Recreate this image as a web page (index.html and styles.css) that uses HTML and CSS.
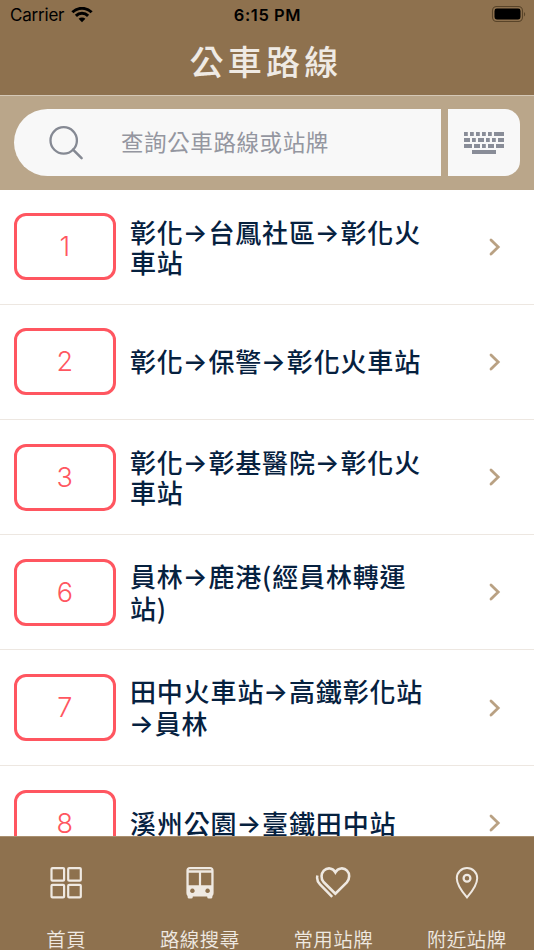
FILE: index.html
```html
<!DOCTYPE html>
<html lang="zh-Hant">
<head>
<meta charset="utf-8">
<title>公車路線</title>
<link rel="stylesheet" href="styles.css">
</head>
<body>
<div class="app">
  <header class="header">
    <div class="status">
      <div class="carrier"><span>Carrier</span>
        <svg width="22" height="16" viewBox="0 0 22 16"><g fill="none" stroke="#000" stroke-width="3"><path d="M1.4 5.3a13.6 13.6 0 0 1 19.2 0"/><path d="M4.9 8.9a8.6 8.6 0 0 1 12.2 0"/></g><path d="M7.6 11.8a4.8 4.8 0 0 1 6.8 0L11 15.3z"/></svg>
      </div>
      <div class="time">6:15 PM</div>
      <div class="battery">
        <svg width="36" height="18" viewBox="0 0 36 18"><rect x="1.5" y="1.5" width="30" height="15" rx="4.2" fill="none" stroke="#594429" stroke-width="1.1"/><rect x="3.5" y="3.6" width="26" height="10.8" rx="2.3"/><path d="M33 7v4.4c1.6-.8 1.6-3.6 0-4.4z" fill="#594429"/></svg>
      </div>
    </div>
    <h1 class="title">公車路線</h1>
  </header>
  <div class="search">
    <div class="field">
      <svg class="lens" width="36" height="36" viewBox="0 0 36 36" fill="none" stroke="#858993" stroke-width="2.3"><circle cx="15.7" cy="15.4" r="13.2"/><path d="M25 24.6l8.6 8.6" stroke-linecap="round" stroke-width="2.5"/></svg>
      <span class="placeholder">查詢公車路線或站牌</span>
    </div>
    <div class="keys">
      <svg width="40" height="23" viewBox="0 0 40 23" fill="#898d98"><path d="M0 0h3.8v4H0zM6 0h3.8v4H6zM12 0h3.8v4H12zM18 0h3.8v4H18zM24 0h3.8v4H24zM30 0h10v4H30zM0 6h6v4H0zM8 6h3.8v4H8zM14 6h6v4h-6zM22 6h3.8v4H22zM28 6h3.8v4H28zM34 6h6v4h-6zM0 12h8v4H0zM10 12h6v4h-6zM18 12h3.8v4H18zM24 12h6v4h-6zM32 12h8v4h-8zM8 18h24v4H8z"/></svg>
    </div>
  </div>
  <main class="list">
    <div class="row"><div class="badge">1</div><div class="name tight">彰化<i>→</i>台鳳社區<i>→</i>彰化火<br>車站</div><svg class="chev" viewBox="0 0 12 18"><path d="M2 2l7.2 7L2 16"/></svg></div>
    <div class="row"><div class="badge">2</div><div class="name tight">彰化<i>→</i>保警<i>→</i>彰化火車站</div><svg class="chev" viewBox="0 0 12 18"><path d="M2 2l7.2 7L2 16"/></svg></div>
    <div class="row"><div class="badge">3</div><div class="name tight">彰化<i>→</i>彰基醫院<i>→</i>彰化火<br>車站</div><svg class="chev" viewBox="0 0 12 18"><path d="M2 2l7.2 7L2 16"/></svg></div>
    <div class="row"><div class="badge">6</div><div class="name">員林<i>→</i>鹿港(經員林轉運<br>站)</div><svg class="chev" viewBox="0 0 12 18"><path d="M2 2l7.2 7L2 16"/></svg></div>
    <div class="row"><div class="badge">7</div><div class="name">田中火車站<i>→</i>高鐵彰化站<br><i>→</i>員林</div><svg class="chev" viewBox="0 0 12 18"><path d="M2 2l7.2 7L2 16"/></svg></div>
    <div class="row"><div class="badge">8</div><div class="name tight">溪州公園<i>→</i>臺鐵田中站</div><svg class="chev" viewBox="0 0 12 18"><path d="M2 2l7.2 7L2 16"/></svg></div>
  </main>
  <nav class="tabs">
    <div class="tab">
      <svg width="36" height="36" viewBox="0 0 36 36" fill="none" stroke="#efe9e2" stroke-width="2.2"><rect x="3.5" y="3.1" width="12.6" height="12.6" rx="1"/><rect x="20.2" y="3.1" width="12.6" height="12.6" rx="1"/><rect x="3.5" y="19.8" width="12.6" height="12.6" rx="1"/><rect x="20.2" y="19.8" width="12.6" height="12.6" rx="1"/></svg>
      <span>首頁</span>
    </div>
    <div class="tab">
      <svg width="36" height="36" viewBox="0 0 36 36"><path fill="#efe9e2" fill-rule="evenodd" d="M8 2h20q3.6 0 3.6 3.6V28q0 2-1.2 3v1q0 1.6-1.6 1.6h-2q-1.6 0-1.6-1.6v-.6H10.800v.6q0 1.600-1.600 1.600h-2Q5.600 33.600 5.600 32v-1Q4.400 30 4.400 28V5.600Q4.400 2 8 2zM7.500 4.200q-.8 0-.8 1.100h22.600q0-1.100-.8-1.100zM6.700 7.800V20.300h10.200V7.800zM19.100 7.800V20.300h10.200V7.800zM10.400 23.500a2.300 2.300 0 1 0 .01 0zM25.600 23.500a2.300 2.300 0 1 0 .01 0z"/></svg>
      <span>路線搜尋</span>
    </div>
    <div class="tab">
      <svg width="36" height="36" viewBox="0 0 36 36" fill="none" stroke="#efe9e2" stroke-width="2.6"><path d="M20.400 28.700L8.800 17.300C5.300 13.600 6.300 8.500 8.800 5.700C12.200 2.300 17.800 2.500 20.400 7.300C23 2.500 29 2.300 32 5.700C34.800 8.500 35 13.600 31.800 17.300z"/><path d="M2.400 10.500C1.600 13.800 2.800 17.200 5 19.400L17.200 31.900" stroke-width="2.500"/></svg>
      <span>常用站牌</span>
    </div>
    <div class="tab">
      <svg width="36" height="36" viewBox="0 0 36 36" fill="none" stroke="#efe9e2" stroke-width="2"><path d="M18 32.400C14.600 28.500 7.800 19.800 7.800 13.200a10.200 10.200 0 0 1 20.400 0C28.200 19.800 21.400 28.500 18 32.400z"/><circle cx="18" cy="13.200" r="3.400" stroke-width="2.300"/></svg>
      <span>附近站牌</span>
    </div>
  </nav>
</div>
</body>
</html>
```

FILE: styles.css
```css
* { box-sizing: border-box; }

body {
  margin: 0;
  font-family: Inter, "Noto Sans CJK TC", sans-serif;
}

.app {
  width: 534px;
  height: 950px;
  display: flex;
  flex-direction: column;
  overflow: hidden;
  background: #fff;
}

.header {
  height: 95px;
  flex: none;
  background: #8e714e;
}

.status {
  height: 30px;
  display: grid;
  grid-template-columns: 1fr auto 1fr;
  align-items: center;
  padding: 0 7px 0 10px;
  font-size: 17px;
  line-height: 30px;
  color: #000;
}

.carrier {
  display: flex;
  align-items: center;
  gap: 7px;
  letter-spacing: -0.2px;
}

.time {
  margin-left: -2px;
  font-weight: 600;
  font-size: 16.5px;
  letter-spacing: 0.6px;
}

.battery {
  display: flex;
  justify-content: flex-end;
  margin-top: -2px;
}

.title {
  margin: 0;
  padding-right: 2px;
  height: 65px;
  line-height: 66px;
  text-align: center;
  font-size: 34px;
  font-weight: 500;
  letter-spacing: 4.2px;
  color: #efeae4;
}

.search {
  height: 95px;
  flex: none;
  display: flex;
  gap: 7px;
  padding: 13px 14px 14px;
  background: #baa68a;
  border-top: 1px solid #d5c8b6;
}

.field {
  flex: 1;
  display: flex;
  align-items: center;
  gap: 37px;
  padding-left: 34px;
  background: #f8f8f8;
  border-radius: 33.5px 0 0 33.5px;
}

.placeholder {
  padding-bottom: 3px;
  font-size: 22.500px;
  font-weight: 400;
  letter-spacing: 0.6px;
  color: #9496a0;
}

.keys {
  width: 72.500px;
  display: flex;
  align-items: center;
  justify-content: center;
  padding-top: 2px;
  background: #f8f8f8;
  border-radius: 0 15px 15px 0;
}

.list {
  flex: 1;
  min-height: 0;
  overflow: hidden;
}

.row {
  height: 115.300px;
  display: flex;
  align-items: center;
  padding: 0.400px 33.500px 0 14px;
  border-bottom: 1px solid #ede7e1;
}

.row:first-child { height: 114.500px; }

.badge {
  width: 101.500px;
  height: 67px;
  flex: none;
  display: flex;
  align-items: center;
  justify-content: center;
  border: 3px solid #ff5660;
  border-radius: 12px;
  font-size: 27px;
  font-weight: 300;
  color: #ff5660;
}

.name {
  flex: 1;
  margin-left: 14.500px;
  padding-bottom: 1px;
  font-family: "Noto Sans CJK TC", sans-serif;
  font-size: 26px;
  font-weight: 500;
  line-height: 32px;
  letter-spacing: 0.850px;
  white-space: nowrap;
  color: #06213f;
}

.name.tight { line-height: 29px; }

.name i {
  display: inline-block;
  width: 24.700px;
  font-family: Inter, sans-serif;
  font-style: normal;
  line-height: 1;
  text-indent: -1px;
  transform: translateY(-1px);
}

.chev {
  width: 12px;
  height: 18px;
  flex: none;
  fill: none;
  stroke: #b9a183;
  stroke-width: 2.800;
  stroke-linecap: round;
}

.tabs {
  height: 114px;
  flex: none;
  display: grid;
  grid-template-columns: repeat(4, 1fr);
  background: #8e714e;
  border-top: 1px solid #a99070;
}

.tab {
  display: flex;
  flex-direction: column;
  align-items: center;
  padding: 28px 1px 0 0;
  gap: 23px;
  font-size: 19.500px;
  font-weight: 350;
  line-height: 33px;
  letter-spacing: 0.400px;
  color: #efe9e2;
}
```
